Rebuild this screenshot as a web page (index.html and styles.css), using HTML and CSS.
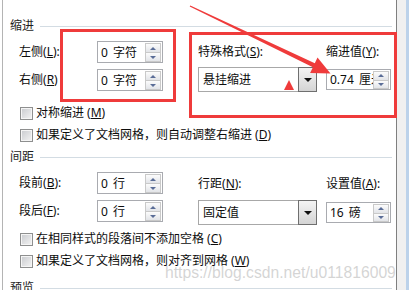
FILE: index.html
```html
<!DOCTYPE html>
<html lang="en">
<head>
  <meta charset="UTF-8">
  <title>段落</title>
  <link rel="stylesheet" href="styles.css">
</head>
<body>
  <div class="page">
    <div class="dialog">

      <div class="group-title"><span>缩进</span><i class="rule"></i></div>
      <div class="fields">
        <div class="col-left">
          <div class="field">
            <label>左侧<span class="lat">(<u>L</u>):</span></label>
            <div class="spin"><span class="spin-text">0 字符</span><span class="spin-btns"><b class="up"></b><b class="down"></b></span></div>
          </div>
          <div class="field">
            <label>右侧<span class="lat">(<u>R</u>)</span></label>
            <div class="spin"><span class="spin-text">0 字符</span><span class="spin-btns"><b class="up"></b><b class="down"></b></span></div>
          </div>
        </div>
        <div class="col-right">
          <label>特殊格式<span class="lat">(<u>S</u>):</span></label>
          <label>缩进值<span class="lat">(<u>Y</u>):</span></label>
          <div class="combo"><span class="combo-text">悬挂缩进</span><span class="combo-btn"></span></div>
          <div class="spin spin-value"><span class="spin-text">0.74 厘米</span><span class="spin-btns"><b class="up"></b><b class="down"></b></span></div>
        </div>
      </div>
      <div class="checks">
        <div class="check"><span class="box"></span>对称缩进<span class="lat">(<u>M</u>)</span></div>
        <div class="check"><span class="box"></span>如果定义了文档网格，则自动调整右缩进<span class="lat">(<u>D</u>)</span></div>
      </div>

      <div class="group-title group-gap"><span>间距</span><i class="rule"></i></div>
      <div class="fields fields-spacing">
        <div class="col-left">
          <div class="field">
            <label>段前<span class="lat">(<u>B</u>):</span></label>
            <div class="spin"><span class="spin-text">0 行</span><span class="spin-btns"><b class="up"></b><b class="down"></b></span></div>
          </div>
          <div class="field">
            <label>段后<span class="lat">(<u>F</u>):</span></label>
            <div class="spin"><span class="spin-text">0 行</span><span class="spin-btns"><b class="up"></b><b class="down"></b></span></div>
          </div>
        </div>
        <div class="col-right">
          <label>行距<span class="lat">(<u>N</u>):</span></label>
          <label>设置值<span class="lat">(<u>A</u>):</span></label>
          <div class="combo"><span class="combo-text">固定值</span><span class="combo-btn"></span></div>
          <div class="spin spin-value"><span class="spin-text">16 磅</span><span class="spin-btns"><b class="up"></b><b class="down"></b></span></div>
        </div>
      </div>
      <div class="checks checks-tight">
        <div class="check"><span class="box"></span>在相同样式的段落间不添加空格<span class="lat">(<u>C</u>)</span></div>
        <div class="check"><span class="box"></span>如果定义了文档网格，则对齐到网格<span class="lat">(<u>W</u>)</span></div>
      </div>

      <div class="group-title group-last"><span>预览</span><i class="rule"></i></div>
    </div>
    <div class="edge"></div>
    <div class="edge-blue"></div>

    <!-- annotations drawn over the dialog -->
    <div class="mark mark-left"></div>
    <div class="mark mark-right"></div>
    <div class="mark-tri"></div>
    <svg class="arrow" width="409" height="290" viewBox="0 0 409 290">
      <polygon fill="#ef3b3b" points="190.3,5.4 314.8,63.2 317.5,57.5 330.5,73.5 310.1,72.9 312.9,67.2 189.7,6.6"/>
    </svg>
    <div class="watermark">https://blog.csdn.net/u011816009</div>
  </div>
</body>
</html>
```

FILE: styles.css
```css
* {
  box-sizing: border-box;
}

body {
  margin: 0;
  font-family: "Noto Sans", "Noto Sans CJK SC", sans-serif;
  font-size: 12px;
  color: #0d0d0d;
  background: #fff;
  text-autospace: no-autospace;
}

.page {
  position: relative;
  display: flex;
  width: 409px;
  height: 290px;
  overflow: hidden;
}

.dialog {
  margin-left: 2px;
  width: 395px;
  border-left: 1px solid #b4b4b4;
  border-right: 1px solid #7f7f7f;
  padding: 19px 4px 0 0;
  background: #fff;
}

.edge {
  width: 9px;
  background: #f0f0f0;
}

.edge-blue {
  width: 3px;
  background: #bcd2ea;
}

.lat {
  font-family: "Noto Sans", sans-serif;
}

u {
  text-decoration: underline;
  text-underline-offset: 1px;
}

/* group headers */
.group-title {
  display: flex;
  align-items: center;
  height: 14px;
  line-height: 14px;
  padding-left: 7px;
  color: #1e1e1e;
}

.group-title .rule {
  flex: 1;
  height: 1px;
  margin-left: 6px;
  background: #d3dce3;
}

.group-gap {
  margin-top: 7px;
}

.group-last {
  margin-top: 12px;
}

/* two-column rows */
.fields {
  display: flex;
  align-items: flex-start;
  padding-left: 16px;
}

.col-left {
  display: flex;
  flex-direction: column;
  gap: 6px;
  margin-top: 8px;
}

.field {
  display: flex;
  align-items: center;
  height: 22px;
}

.field label {
  width: 78px;
  line-height: 14px;
}

.col-right {
  display: grid;
  grid-template-columns: 119px 65px;
  column-gap: 9px;
  row-gap: 8px;
  margin-left: 35px;
  margin-top: 12px;
}

.col-right label {
  line-height: 14px;
  height: 14px;
}

.fields-spacing .col-right {
  margin-top: 13px;
  row-gap: 9px;
}

/* spin box */
.spin {
  display: flex;
  width: 66px;
  height: 22px;
  border: 1px solid #a9abb0;
  background: #fff;
  padding: 1px 1px 0 0;
}

.spin-text {
  flex: 1;
  padding-left: 3px;
  line-height: 19px;
  white-space: pre;
  word-spacing: 2px;
  overflow: hidden;
}

.spin-btns {
  display: flex;
  flex-direction: column;
  width: 16px;
  height: 19px;
}

.spin-btns b {
  flex: 1;
  display: flex;
  align-items: center;
  justify-content: center;
  border: 1px solid #c9c9c9;
  background: linear-gradient(#fcfcfc, #e2e4e8);
}

.spin-btns b + b {
  border-top: none;
}

.spin-btns .up::after,
.spin-btns .down::after {
  content: "";
  border-left: 3px solid transparent;
  border-right: 3px solid transparent;
}

.spin-btns .up::after {
  border-bottom: 3px solid #5a6d97;
}

.spin-btns .down::after {
  border-top: 3px solid #5a6d97;
}

.spin-value {
  width: 65px;
  height: 21px;
  margin-top: 2px;
}

.spin-value .spin-text {
  line-height: 18px;
}

.spin-value .spin-btns {
  height: 18px;
}

/* drop-down */
.combo {
  display: flex;
  height: 25px;
  border: 1px solid #a8a8a8;
  background: #fff;
}

.combo-text {
  flex: 1;
  padding-left: 4px;
  line-height: 23px;
}

.combo-btn {
  display: flex;
  align-items: center;
  justify-content: center;
  width: 19px;
  margin: -1px -1px -1px 0;
  border: 1px solid #6f6f6f;
  background: linear-gradient(#f4f4f4, #d4d4d4);
}

.combo-btn::after {
  content: "";
  border-left: 4px solid transparent;
  border-right: 4px solid transparent;
  border-top: 4px solid #111;
}

/* check boxes */
.checks {
  display: flex;
  flex-direction: column;
  gap: 6px;
  margin-top: 13px;
  padding-left: 17px;
}

.checks-tight {
  margin-top: 6px;
}

.check {
  display: flex;
  align-items: center;
  gap: 3px;
  height: 16px;
  line-height: 16px;
  white-space: nowrap;
}

.check .box {
  width: 13px;
  height: 13px;
  border: 1px solid #8e8f8f;
  box-shadow: inset 0 0 0 1px #f5f5f5;
  background: linear-gradient(135deg, #c8cace, #f4f4f4);
}

/* red annotations */
.mark {
  position: absolute;
  border: 3px solid #ef3b3b;
}

.mark-left {
  left: 60px;
  top: 29px;
  width: 116px;
  height: 73px;
}

.mark-right {
  left: 189px;
  top: 32px;
  width: 208px;
  height: 86px;
}

.mark-tri {
  position: absolute;
  left: 284px;
  top: 80px;
  border-left: 5px solid transparent;
  border-right: 5px solid transparent;
  border-bottom: 10px solid #ef3b3b;
}

.arrow {
  position: absolute;
  left: 0;
  top: 0;
  pointer-events: none;
}

.watermark {
  position: absolute;
  left: 165px;
  top: 265px;
  font-family: "Liberation Sans", Arial, sans-serif;
  font-size: 15.7px;
  line-height: 16px;
  color: rgba(170, 170, 170, 0.5);
  white-space: nowrap;
}
```
